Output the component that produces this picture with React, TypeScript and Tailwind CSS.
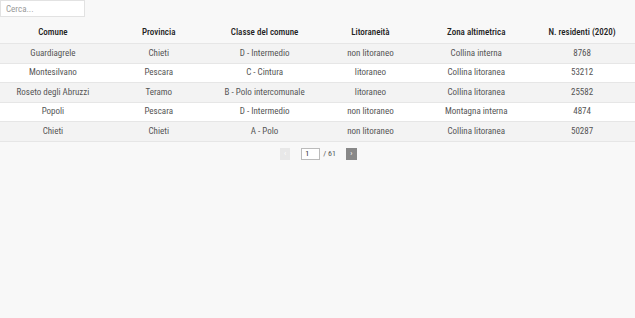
const columns = [
  "Comune",
  "Provincia",
  "Classe del comune",
  "Litoraneità",
  "Zona altimetrica",
  "N. residenti (2020)",
];

const rows = [
  ["Guardiagrele", "Chieti", "D - Intermedio", "non litoraneo", "Collina interna", "8768"],
  ["Montesilvano", "Pescara", "C - Cintura", "litoraneo", "Collina litoranea", "53212"],
  ["Roseto degli Abruzzi", "Teramo", "B - Polo intercomunale", "litoraneo", "Collina litoranea", "25582"],
  ["Popoli", "Pescara", "D - Intermedio", "non litoraneo", "Montagna interna", "4874"],
  ["Chieti", "Chieti", "A - Polo", "non litoraneo", "Collina litoranea", "50287"],
];

export default function App() {
  return (
    <div className="min-h-[318px] bg-[#f8f8f8] font-['Roboto_Condensed',Roboto,sans-serif] text-[9px]">
      <input
        type="text"
        placeholder="Cerca..."
        className="block h-[17px] w-[85px] border border-[#e2e2e2] bg-white px-[5px] text-[9px] text-[#555] outline-none placeholder:text-[#999]"
      />

      {/* table */}
      <div className="grid h-[26px] grid-cols-6 items-center text-center font-medium text-[#222]">
        {columns.map((c) => (
          <div key={c} className="pt-[6px]">{c}</div>
        ))}
      </div>
      {rows.map((r, i) => (
        <div
          key={r[0]}
          className={
            i % 2 === 0
              ? "grid h-[19.5px] grid-cols-6 items-center border-t border-[#e6e6e6] bg-[#f3f3f3] text-center text-[#555]"
              : "grid h-[19.5px] grid-cols-6 items-center border-t border-[#e6e6e6] bg-white text-center text-[#555]"
          }
        >
          {r.map((v, j) => (
            <div key={j}>{v}</div>
          ))}
        </div>
      ))}
      <div className="border-t border-[#e6e6e6]" />

      {/* pagination */}
      <div className="mt-[6px] flex items-center justify-center pl-[2px] text-[8px] text-[#555]">
        <button className="flex h-[12px] w-[10px] items-center justify-center bg-[#e8e8e8] text-[8px] leading-none text-white">
          ‹
        </button>
        <input
          type="text"
          defaultValue="1"
          className="ml-[11px] h-[12px] w-[19px] border border-[#bbb] bg-white px-[3px] text-[8px] text-[#333] outline-none"
        />
        <span className="ml-[3px]">/ 61</span>
        <button className="ml-[10px] flex h-[12px] w-[11px] items-center justify-center bg-[#888] text-[8px] leading-none text-white">
          ›
        </button>
      </div>
    </div>
  );
}
